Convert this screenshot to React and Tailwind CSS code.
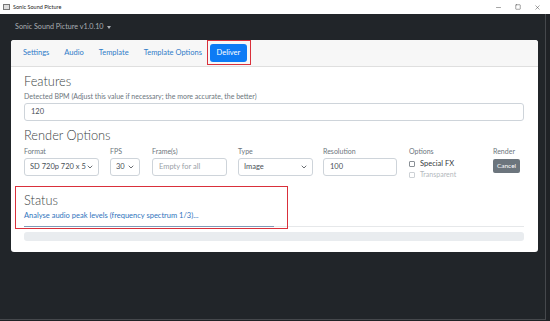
import { ChevronDown, Minus, Square, X } from "lucide-react";

const font = { fontFamily: 'Lato, "Noto Sans", "Liberation Sans", sans-serif' };

const tabs = ["Settings", "Audio", "Template", "Template Options"];

const Label = ({ children }) => (
	<div className="h-[11px] text-[7px] leading-[11px] text-[#6c757d]">{children}</div>
);

const Select = ({ value, width }) => (
	<div className={`${width} h-[18px] border border-[#ced4da] rounded-[3px] bg-white flex items-center justify-between pl-[5px] pr-[4px] overflow-hidden`}>
		<span className="text-[7.5px] text-[#495057] whitespace-nowrap overflow-hidden">{value}</span>
		<ChevronDown size={8} strokeWidth={2.2} className="text-[#343a40] shrink-0" />
	</div>
);

const Input = ({ value, placeholder, width }) => (
	<div className={`${width} h-[18px] border border-[#ced4da] rounded-[3px] bg-white flex items-center px-[6px]`}>
		{value ? (
			<span className="text-[7.5px] text-[#495057]">{value}</span>
		) : (
			<span className="text-[7.5px] text-[#9aa1a7]">{placeholder}</span>
		)}
	</div>
);

const App = () => {
	return (
		<div className="w-[550px] h-[321px] bg-[#1f2226] overflow-hidden flex flex-col" style={font}>
			{/* title bar */}
			<div className="h-[14px] bg-white flex items-center shrink-0">
				<div className="ml-[3px] w-[7px] h-[6px] border border-[#777] bg-[#ddd]"></div>
				<span className="ml-[3px] text-[5.5px] text-[#222]">Sonic Sound Picture</span>
				<div className="ml-auto flex items-center gap-[13px] mr-[9px] text-[#333]">
					<Minus size={7} strokeWidth={1.5} />
					<Square size={6} strokeWidth={1.8} />
					<X size={7} strokeWidth={1.5} />
				</div>
			</div>

			<div className="w-[546px] h-[306px] bg-[#212529] border-r border-b border-[#45484c] flex flex-col">
				{/* navbar brand */}
				<div className="h-[26px] flex items-center pl-[15px] text-[7.2px] text-[#a9aeb3]">
					Sonic Sound Picture v1.0.10
					<span className="ml-[3px] border-t-[3px] border-t-[#a9aeb3] border-x-[2.5px] border-x-transparent"></span>
				</div>

				{/* card */}
				<div className="ml-[11px] w-[527px] h-[212px] bg-white rounded-[3px] overflow-hidden flex flex-col">
					<div className="h-[27px] bg-[#f7f7f7] border-b border-[#dfdfdf] flex items-center pl-[12px]">
						<div className="flex items-center gap-[15px] text-[7.5px] text-[#2f7bc8]">
							{tabs.map((t) => (
								<span key={t}>{t}</span>
							))}
						</div>
						<div className="ml-[8px] relative">
							<div className="w-[37px] h-[18px] rounded-[3px] bg-[#0d7bf5] text-white text-[7.5px] flex items-center justify-center">
								Deliver
							</div>
							<div className="absolute left-[-3px] top-[-4px] w-[44px] h-[25px] border-[1.5px] border-[#d9303b]"></div>
						</div>
					</div>

					<div className="px-[13px] pt-[5px] flex flex-col relative">
						<div className="h-[19px] text-[12.8px] leading-[19px] font-light text-[#3b3f44]">Features</div>
						<Label>Detected BPM (Adjust this value if necessary; the more accurate, the better)</Label>
						<div className="mt-[1px]">
							<Input value="120" width="w-[500px]" />
						</div>

						<div className="mt-[5px] h-[19px] text-[12.8px] leading-[19px] font-light text-[#3b3f44]">Render Options</div>
						<div className="flex mt-[1px]">
							<div className="w-[86px]">
								<Label>Format</Label>
								<div className="mt-[1px]"><Select value="SD 720p 720 x 5" width="w-[75px]" /></div>
							</div>
							<div className="w-[42px]">
								<Label>FPS</Label>
								<div className="mt-[1px]"><Select value="30" width="w-[30px]" /></div>
							</div>
							<div className="w-[86px]">
								<Label>Frame(s)</Label>
								<div className="mt-[1px]"><Input placeholder="Empty for all" width="w-[75px]" /></div>
							</div>
							<div className="w-[85px]">
								<Label>Type</Label>
								<div className="mt-[1px]"><Select value="Image" width="w-[75px]" /></div>
							</div>
							<div className="w-[86px]">
								<Label>Resolution</Label>
								<div className="mt-[1px]"><Input value="100" width="w-[74px]" /></div>
							</div>
							<div className="w-[84px]">
								<Label>Options</Label>
								<div className="flex items-center mt-[1px] h-[11px]">
									<div className="w-[6px] h-[6px] border border-[#8a9096] rounded-[1px] bg-white"></div>
									<span className="ml-[5px] text-[7.5px] text-[#343a40]">Special FX</span>
								</div>
								<div className="flex items-center h-[11px]">
									<div className="w-[6px] h-[6px] border border-[#cdd1d5] rounded-[1px] bg-white"></div>
									<span className="ml-[5px] text-[7px] text-[#b3b8bd]">Transparent</span>
								</div>
							</div>
							<div>
								<Label>Render</Label>
								<div className="mt-[2px] w-[27px] h-[14px] rounded-[2px] bg-[#6c757d] text-white text-[6.5px] flex items-center justify-center">
									Cancel
								</div>
							</div>
						</div>

						<div className="mt-[11px] h-[19px] text-[12.8px] leading-[19px] font-light text-[#3b3f44]">Status</div>
						<div className="mt-[1px] h-[10px] text-[7.5px] leading-[10px] text-[#2f74bd]">
							Analyse audio peak levels (frequency spectrum 1/3)...
						</div>
						<div className="mt-[5px] h-[1px] w-[500px] bg-[#e6e8ea] relative">
							<div className="absolute left-0 top-0 h-[1px] w-[250px] bg-[#7f9bb8]"></div>
						</div>
						<div className="mt-[5px] h-[9px] w-[500px] rounded-[3px] bg-[#e9ecef]"></div>

						<div className="absolute left-[4px] top-[119px] w-[273px] h-[43px] border-[1.5px] border-[#d9303b]"></div>
					</div>
				</div>
			</div>
		</div>
	);
};

export default App;
